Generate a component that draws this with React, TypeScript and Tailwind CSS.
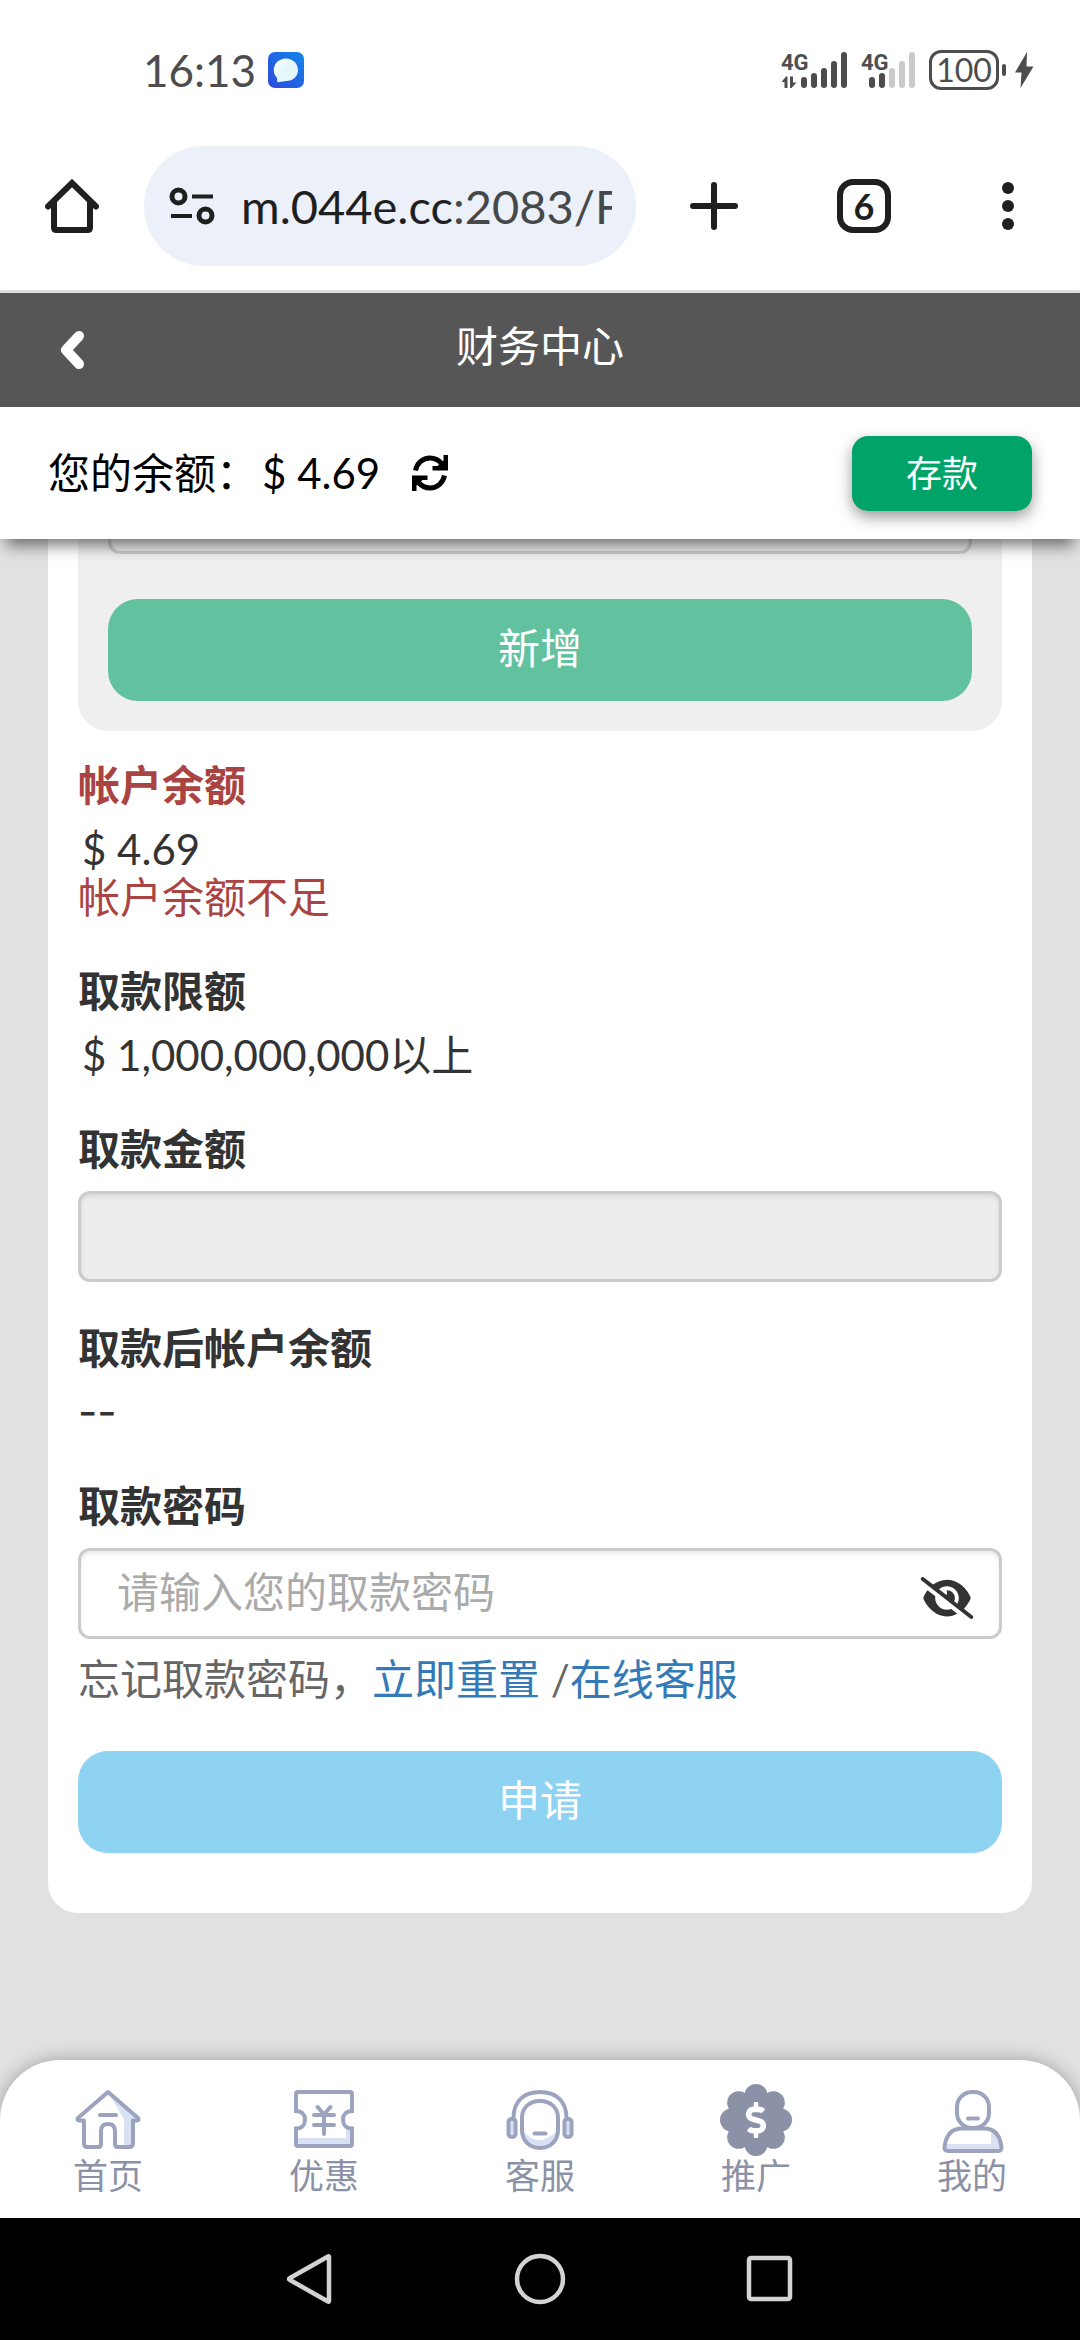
import React, { useState } from "react";
import { FaDollarSign } from "react-icons/fa";
import { FaEyeSlash } from "react-icons/fa6";

const INK = "#1f1f1f";
const STATUS = "#4d4d4d";
const LINE = "#9ca3bf";
const TINT = "#dbe1f5";

function ChatAppIcon() {
  return (
    <svg className="h-9 w-9" viewBox="0 0 36 36" aria-hidden="true">
      <defs>
        <linearGradient id="chatBg" x1="1" y1="0" x2="0" y2="1">
          <stop offset="0" stopColor="#1186ea" />
          <stop offset="1" stopColor="#2f48dc" />
        </linearGradient>
        <linearGradient id="chatBubble" x1="0" y1="0" x2="1" y2="1">
          <stop offset="0" stopColor="#ffffff" />
          <stop offset="0.5" stopColor="#e2f6fb" />
          <stop offset="1" stopColor="#eef9fd" />
        </linearGradient>
      </defs>
      <rect width="36" height="36" rx="7" fill="url(#chatBg)" />
      <path
        d="M18 6.500C24.800 6.500 30 11.500 30 18C30 24.500 25 29 18 29C15 29.500 12 30 9.300 30.300C9.300 28.500 9.200 27 8.800 25.500C6.800 23.500 5.800 21 5.800 18C5.800 11.500 11 6.500 18 6.500Z"
        fill="url(#chatBubble)"
      />
    </svg>
  );
}

function Signal({ active, arrows }: { active: number; arrows: boolean }) {
  const heights = [11, 15, 20, 27, 36];
  return (
    <svg className="h-[38px] w-[66px] overflow-visible" viewBox="0 0 66 38" aria-hidden="true">
      <text x="0" y="19" fontFamily="Roboto, sans-serif" fontSize="22" fontWeight="700" fill={STATUS}>
        4G
      </text>
      {arrows && (
        <path d="M6.500 37V25.500H5L0.500 31H3.500V37ZM9 25.500V37H10.500L15.500 31.500H12V25.500Z" fill={STATUS} />
      )}
      {heights.map((h, i) => (
        <rect
          key={h}
          x={(arrows ? 20 : 8) + i * 10}
          y={37 - h}
          width="6"
          height={h}
          rx="3"
          fill={i < active ? STATUS : "#cacaca"}
        />
      ))}
    </svg>
  );
}

function StatusBar() {
  return (
    <div className="flex h-[140px] items-center justify-between pr-[46px] pl-[143px] text-[#4d4d4d]">
      <div className="flex items-center gap-3">
        <span className="text-[44px] leading-[48px]">16:13</span>
        <ChatAppIcon />
      </div>
      <div className="flex items-center">
        <Signal active={5} arrows />
        <span className="ml-[14px] flex">
          <Signal active={2} arrows={false} />
        </span>
        <span className="ml-[2px] flex h-10 w-[70px] items-center justify-center rounded-xl border-[3px] border-[#4d4d4d] text-[32px] leading-[34px]">
          100
        </span>
        <span className="ml-[3px] h-3 w-1 rounded-sm bg-[#4d4d4d]" />
        <svg className="ml-2 h-[38px] w-5" viewBox="0 0 20 38" aria-hidden="true">
          <path d="M13 1L1 21.500H7.500L6.500 37L19.500 15.500H12.500Z" fill={STATUS} />
        </svg>
      </div>
    </div>
  );
}

function BrowserBar() {
  return (
    <div className="flex h-[153px] items-start border-b-[3px] border-[#dfe1e0] pt-[6px]">
      <button type="button" aria-label="主页" className="flex h-[120px] w-36 shrink-0 items-center justify-center">
        <svg className="h-[54px] w-[54px]" viewBox="0 0 54 54" fill="none" stroke={INK} strokeWidth="6">
          <path d="M3 27.500L27 4L51 27.500" strokeLinecap="round" />
          <path d="M9 23V48.500Q9 51 11.500 51H42.500Q45 51 45 48.500V23" />
        </svg>
      </button>
      <div className="flex h-[120px] min-w-0 flex-1 items-center rounded-full bg-[#ebf0f9] pr-6 pl-[25px]">
        <svg className="h-[38px] w-[46px] shrink-0" viewBox="0 0 46 38" fill="none" stroke={INK} aria-hidden="true">
          <circle cx="9.500" cy="9.500" r="6.500" strokeWidth="5" />
          <path d="M23 9.500H44M2 29H23" strokeWidth="4" />
          <circle cx="36.500" cy="28.500" r="6.500" strokeWidth="5" />
        </svg>
        <span className="ml-[26px] min-w-0 flex-1 overflow-hidden text-[47px] leading-[60px] whitespace-nowrap text-[#46494a]">
          <span className="text-[#1f1f1f]">m.044e.cc</span>:2083/F
        </span>
      </div>
      <div className="flex h-[120px] w-[444px] shrink-0 items-center">
        <button type="button" aria-label="新标签页" className="flex w-[156px] justify-center">
          <svg className="h-12 w-12" viewBox="0 0 48 48" stroke={INK} strokeWidth="6" strokeLinecap="round">
            <path d="M24 3V45M3 24H45" />
          </svg>
        </button>
        <button
          type="button"
          aria-label="6 个标签页"
          className="mx-[45px] flex h-[54px] w-[54px] items-center justify-center rounded-2xl border-[6px] border-[#1f1f1f] text-4xl leading-10 font-bold text-[#1f1f1f]"
        >
          6
        </button>
        <button type="button" aria-label="更多" className="flex w-36 justify-center">
          <svg className="h-12 w-3" viewBox="0 0 12 48" fill={INK}>
            <circle cx="6" cy="6" r="6" />
            <circle cx="6" cy="24" r="6" />
            <circle cx="6" cy="42" r="6" />
          </svg>
        </button>
      </div>
    </div>
  );
}

function RefreshIcon() {
  return (
    <svg className="h-9 w-9" viewBox="0 0 36 36" aria-hidden="true">
      {[0, 180].map((angle) => (
        <g key={angle} transform={`rotate(${angle} 18 18)`}>
          <path d="M3.500 15.500C5 8 11 3 18 3C22.500 3 26.500 5 29.500 8.500" fill="none" stroke="currentColor" strokeWidth="5" />
          <path d="M31.500 0H36V15.500H20.500V11H25.500L31.500 5.500Z" fill="currentColor" />
        </g>
      ))}
    </svg>
  );
}

function PageHeader() {
  return (
    <header className="relative z-10 shadow-[0_12px_15px_-6px_rgba(0,0,0,0.55)]">
      <div className="grid h-[114px] grid-cols-[1fr_auto_1fr] items-center bg-[#565656] text-white">
        <button type="button" aria-label="返回" className="flex w-36 justify-center">
          <svg className="h-10 w-[26px]" viewBox="0 0 26 40" fill="none" stroke="currentColor" strokeWidth="10">
            <path d="M20 6L7 20L20 34" strokeLinecap="round" strokeLinejoin="round" />
          </svg>
        </button>
        <h1 className="pb-2 text-[42px] leading-[60px]">财务中心</h1>
      </div>
      <div className="flex h-[132px] items-center bg-white px-12 text-black">
        <span className="text-[42px] leading-[60px]">您的余额：</span>
        <span className="ml-1 text-[42px] leading-[60px]">$ 4.69</span>
        <button type="button" aria-label="刷新余额" className="ml-8">
          <RefreshIcon />
        </button>
        <button
          type="button"
          className="ml-auto h-[75px] w-[180px] rounded-2xl bg-[#00a469] text-4xl leading-10 text-white shadow-[0_6px_15px_rgba(0,0,0,0.4)]"
        >
          存款
        </button>
      </div>
    </header>
  );
}

const labelClass = "block text-[42px] leading-[60px] font-bold";
const valueClass = "text-[42px] leading-[48px]";
const fieldClass =
  "block h-[91px] w-full rounded-xl border-[3px] border-[#cbcbcb] shadow-[inset_0_3px_4px_rgba(0,0,0,0.08)] outline-none";

function WithdrawForm() {
  const [password, setPassword] = useState("");
  return (
    <form className="rounded-b-[30px] bg-white px-[30px] pb-[60px] text-[#333]" onSubmit={(e) => e.preventDefault()}>
      <div className="overflow-hidden rounded-b-[30px] bg-[#efefef] px-[30px] pb-[30px]">
        <input aria-label="收款账户" disabled className={`${fieldClass} -mt-[76px] bg-[#eee]`} />
        <button
          type="button"
          className="mt-[45px] h-[102px] w-full rounded-[30px] bg-[#62c2a0] pb-1 text-[42px] leading-[60px] text-white"
        >
          新增
        </button>
      </div>

      <section className="mt-6">
        <h2 className={`${labelClass} text-[#a94442]`}>帐户余额</h2>
        <p className={`${valueClass} mt-[10px] pl-1`}>$ 4.69</p>
        <p className={`${valueClass} text-[#a94442]`}>帐户余额不足</p>
      </section>

      <section className="mt-10">
        <h2 className={labelClass}>取款限额</h2>
        <p className={`${valueClass} mt-[10px] pl-1`}>$ 1,000,000,000以上</p>
      </section>

      <section className="mt-10">
        <label htmlFor="amount" className={labelClass}>
          取款金额
        </label>
        <input id="amount" disabled className={`${fieldClass} mt-3 bg-[#ededed]`} />
      </section>

      <section className="mt-9">
        <h2 className={labelClass}>取款后帐户余额</h2>
        <p className={`${valueClass} mt-[10px] font-[Inter,sans-serif]`}>--</p>
      </section>

      <section className="mt-10">
        <label htmlFor="password" className={labelClass}>
          取款密码
        </label>
        <div className="relative mt-3">
          <input
            id="password"
            type="password"
            value={password}
            onChange={(e) => setPassword(e.target.value)}
            placeholder="请输入您的取款密码"
            className={`${fieldClass} bg-white pr-28 pb-1 pl-9 text-[42px] leading-[60px] placeholder:text-[#aaa]`}
          />
          <button type="button" aria-label="显示密码" className="absolute inset-y-0 right-7 flex items-center pt-2">
            <FaEyeSlash className="h-[42px] w-[54px]" />
          </button>
        </div>
        <p className={`${valueClass} mt-4 text-[#666]`}>
          忘记取款密码，
          <a href="#reset" className="text-[#337ab7]">
            立即重置
          </a>{" "}
          /
          <a href="#service" className="text-[#337ab7]">
            在线客服
          </a>
        </p>
      </section>

      <button
        type="submit"
        className="mt-12 h-[102px] w-full rounded-[30px] bg-[#8fd3f2] pb-1 text-[42px] leading-[60px] text-white"
      >
        申请
      </button>
    </form>
  );
}

const navSvg = {
  className: "h-[74px] w-[74px]",
  viewBox: "0 0 74 74",
  fill: "none",
  stroke: LINE,
  strokeWidth: 4,
  strokeLinecap: "round" as const,
  strokeLinejoin: "round" as const,
  "aria-hidden": true,
};

function HouseIcon() {
  return (
    <svg {...navSvg}>
      <path d="M37 9L66 35L62 40V60Q62 63 58 63H53V36Z" fill={TINT} stroke="none" />
      <path d="M37 9L67 35Q68.500 37.500 66 37.500H62V60Q62 64 58 64H47Q44 64 44 61V48Q44 41 37 41Q30 41 30 48V61Q30 64 27 64H16Q13 64 13 60V37.500H8Q5.500 37.500 7 35Z" />
      <path d="M29 32H45" />
    </svg>
  );
}

function CouponIcon() {
  return (
    <svg {...navSvg}>
      <path d="M9 55H59V46H65V63H9Z" fill={TINT} stroke="none" />
      <path
        d="M11 9H63Q65 9 65 11V28C59 28 56 32 56 36.500C56 41.500 59 45.500 65 45.500V61Q65 63 63 63H11Q9 63 9 61V45.500C15 45.500 18 41.500 18 36.500C18 32 15 28 9 28V11Q9 9 11 9Z"
        strokeLinejoin="miter"
      />
      <path d="M30.500 24L37 31.500L43.500 24M27 32H47M27 42H47M37 32V51" />
    </svg>
  );
}

function HeadsetIcon() {
  return (
    <svg {...navSvg}>
      <path d="M20 48Q35 66 54 48Q51 65 37 65Q23 65 20 48Z" fill={TINT} stroke="none" />
      <path d="M10.500 35C10.500 18 21 9 37 9C53 9 63.500 18 63.500 35" />
      <path d="M19 35C19 24 27 18 37 18C47 18 55 24 55 35V47C55 58 47 65 37 65C27 65 19 58 19 47Z" />
      <rect x="5.500" y="36" width="7" height="18" rx="3" fill={TINT} />
      <rect x="61.500" y="36" width="7" height="18" rx="3" fill={TINT} />
      <path d="M31.500 50.500H42.500" />
    </svg>
  );
}

function PromoIcon() {
  const petals = [0, 45, 90, 135, 180, 225, 270, 315];
  return (
    <span className="relative flex h-[74px] w-[74px] items-center justify-center">
      <svg className="absolute inset-0 h-full w-full" viewBox="0 0 74 74" fill="#8b91a7" aria-hidden="true">
        <circle cx="37" cy="37" r="29" />
        {petals.map((a) => (
          <circle key={a} cx="37" cy="12.500" r="11.500" transform={`rotate(${a} 37 37)`} />
        ))}
      </svg>
      <FaDollarSign className="relative h-9 w-9 text-white" />
    </span>
  );
}

function PersonIcon() {
  return (
    <svg {...navSvg}>
      <path d="M9 61H56V46L63 52L66 67H10Z" fill={TINT} stroke="none" />
      <rect x="22" y="9" width="32" height="36" rx="15" />
      <path d="M27 45.500H49C59 45.500 65 52 66.500 64Q67 68 63 68H13Q9 68 9.500 64C11 52 17 45.500 27 45.500Z" />
      <path d="M33 35.500H43" />
    </svg>
  );
}

const tabs = [
  { label: "首页", Icon: HouseIcon },
  { label: "优惠", Icon: CouponIcon },
  { label: "客服", Icon: HeadsetIcon },
  { label: "推广", Icon: PromoIcon },
  { label: "我的", Icon: PersonIcon },
];

function TabBar() {
  return (
    <nav className="relative z-10 grid h-[158px] grid-cols-5 rounded-t-[60px] bg-white shadow-[0_0_18px_rgba(0,0,0,0.3)]">
      {tabs.map(({ label, Icon }) => (
        <a key={label} href={`#${label}`} className="flex flex-col items-center pt-[23px] text-[#8b91a7]">
          <Icon />
          <span className="text-[35px] leading-[36px]">{label}</span>
        </a>
      ))}
    </nav>
  );
}

function SystemBar() {
  return (
    <div className="relative z-20 flex h-[122px] items-center justify-center gap-[178px] bg-black">
      <button type="button" aria-label="后退">
        <svg className="h-[52px] w-[52px]" viewBox="0 0 52 52" fill="none" stroke="#d3d3d3" strokeWidth="4.500" strokeLinejoin="round">
          <path d="M45 4V48Q45 49 44 48.500L6 27Q4 26 6 25L44 3.500Q45 3 45 4Z" />
        </svg>
      </button>
      <button type="button" aria-label="主屏幕">
        <svg className="h-[52px] w-[52px]" viewBox="0 0 52 52" fill="none" stroke="#d3d3d3" strokeWidth="4.500">
          <circle cx="26" cy="26" r="23" />
        </svg>
      </button>
      <button type="button" aria-label="最近任务">
        <svg className="h-[52px] w-[52px]" viewBox="0 0 52 52" fill="none" stroke="#d3d3d3" strokeWidth="4.500">
          <rect x="5" y="5" width="41" height="41" rx="2" />
        </svg>
      </button>
    </div>
  );
}

export default function App() {
  return (
    <div className="flex min-h-screen flex-col bg-white font-[Lato,'Noto_Sans_CJK_SC',sans-serif]">
      <StatusBar />
      <BrowserBar />
      <PageHeader />
      <div className="flex flex-1 flex-col bg-[#e1e1e1]">
        <main className="flex-1 px-12 pb-16">
          <WithdrawForm />
        </main>
        <TabBar />
      </div>
      <SystemBar />
    </div>
  );
}
